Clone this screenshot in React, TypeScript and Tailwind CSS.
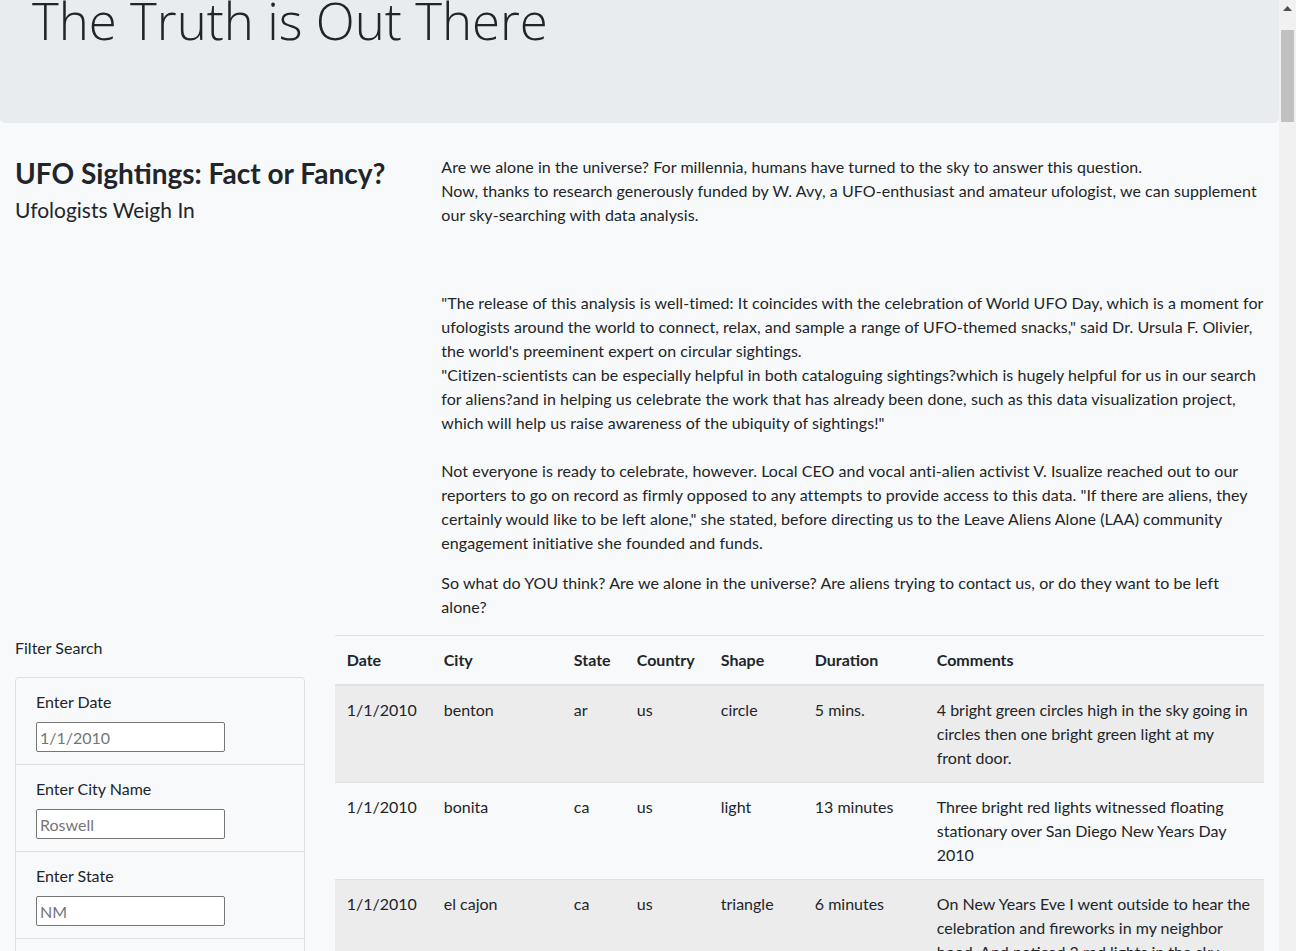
const FONT = "font-['Lato','Liberation_Sans',sans-serif]";

interface Sighting {
  date: string;
  city: string;
  state: string;
  country: string;
  shape: string;
  duration: string;
  comments: string;
}

const SIGHTINGS: Sighting[] = [
  {
    date: "1/1/2010",
    city: "benton",
    state: "ar",
    country: "us",
    shape: "circle",
    duration: "5 mins.",
    comments: "4 bright green circles high in the sky going in circles then one bright green light at my front door.",
  },
  {
    date: "1/1/2010",
    city: "bonita",
    state: "ca",
    country: "us",
    shape: "light",
    duration: "13 minutes",
    comments: "Three bright red lights witnessed floating stationary over San Diego New Years Day 2010",
  },
  {
    date: "1/1/2010",
    city: "el cajon",
    state: "ca",
    country: "us",
    shape: "triangle",
    duration: "6 minutes",
    comments:
      "On New Years Eve I went outside to hear the celebration and fireworks in my neighbor hood. And noticed 3 red lights in the sky.",
  },
];

const COLUMNS = [
  { label: "Date", width: "w-[97px]" },
  { label: "City", width: "w-[130px]" },
  { label: "State", width: "w-[63px]" },
  { label: "Country", width: "w-[84px]" },
  { label: "Shape", width: "w-[94px]" },
  { label: "Duration", width: "w-[122px]" },
  { label: "Comments", width: "" },
];

const FILTERS = [
  { label: "Enter Date", placeholder: "1/1/2010" },
  { label: "Enter City Name", placeholder: "Roswell" },
  { label: "Enter State", placeholder: "NM" },
  { label: "Enter Country", placeholder: "us" },
  { label: "Enter Shape", placeholder: "circle" },
];

function FilterItem({ label, placeholder }: { label: string; placeholder: string }) {
  return (
    <li className="px-5 py-3 border-b border-[#dfe0e1] last:border-b-0">
      <label className="block leading-6 mb-2">{label}</label>
      <input
        type="text"
        placeholder={placeholder}
        className="block w-[189px] h-[30px] px-[3px] border border-[#767676] rounded-[2px] bg-white text-base placeholder:text-[#757575] outline-none"
      />
    </li>
  );
}

function FakeScrollbar() {
  return (
    <div className="w-[17px] shrink-0 bg-[#f1f1f1] flex flex-col items-center">
      <div className="h-[17px] flex items-center justify-center">
        <svg width="9" height="5" viewBox="0 0 9 5">
          <path d="M0 5 L4.5 0 L9 5 Z" fill="#505050" />
        </svg>
      </div>
      <div className="mt-[13px] w-[13px] h-[92px] bg-[#c1c1c1]" />
    </div>
  );
}

export default function App() {
  return (
    <div className={`h-[951px] overflow-hidden flex text-[#212529] ${FONT}`}>
      <main className="flex-1 bg-[#f8f9fa] overflow-hidden">
        {/* Jumbotron, scrolled part way off the top */}
        <header className="h-[123px] overflow-hidden bg-[#e9ecef] rounded-b-[5px] px-8 pb-16 flex flex-col justify-end mb-8">
          <h1 className="font-['Open_Sans','Lato',sans-serif] text-[51px] font-light leading-[1.2] mb-2 whitespace-nowrap">
            The Truth is Out There
          </h1>
        </header>

        {/* Article */}
        <section className="flex">
          <div className="w-1/3 px-[15px]">
            <h3 className="text-[28px] font-bold leading-[1.2] mb-[6px] pt-[2px]">UFO Sightings: Fact or Fancy?</h3>
            <h5 className="text-[21px] leading-[1.2]">Ufologists Weigh In</h5>
          </div>
          <div className="w-2/3 px-[15px] text-base leading-6 tracking-[0.06px]">
            <p className="mb-16">
              Are we alone in the universe? For millennia, humans have turned to the sky to answer this question.
              <br />
              Now, thanks to research generously funded by W. Avy, a UFO-enthusiast and amateur ufologist, we can
              supplement our sky-searching with data analysis.
            </p>
            <p>
              "The release of this analysis is well-timed: It coincides with the celebration of World UFO Day, which is a
              moment for ufologists around the world to connect, relax, and sample a range of UFO-themed snacks," said Dr.
              Ursula F. Olivier, the world's preeminent expert on circular sightings.
              <br />
              "Citizen-scientists can be especially helpful in both cataloguing sightings?which is hugely helpful for us in
              our search for aliens?and in helping us celebrate the work that has already been done, such as this data
              visualization project, which will help us raise awareness of the ubiquity of sightings!"
              <br />
              <br />
              Not everyone is ready to celebrate, however. Local CEO and vocal anti-alien activist V. Isualize reached out
              to our reporters to go on record as firmly opposed to any attempts to provide access to this data. "If there
              are aliens, they certainly would like to be left alone," she stated, before directing us to the Leave Aliens
              Alone (LAA) community engagement initiative she founded and funds.
            </p>
            <p className="mt-4 mb-4">
              So what do YOU think? Are we alone in the universe? Are aliens trying to contact us, or do they want to be
              left alone?
            </p>
          </div>
        </section>

        {/* Filters + table */}
        <section className="flex text-base leading-6">
          <aside className="w-1/4 px-[15px]">
            <p className="leading-6 mb-[17px] mt-px">Filter Search</p>
            <ul className="border border-[#dfe0e1] rounded-[4px]">
              {FILTERS.map((f) => (
                <FilterItem key={f.label} label={f.label} placeholder={f.placeholder} />
              ))}
            </ul>
          </aside>
          <div className="w-3/4 px-[15px]">
            <table className="w-full table-fixed border-collapse">
              <thead>
                <tr>
                  {COLUMNS.map((c) => (
                    <th
                      key={c.label}
                      className={`${c.width} text-left font-bold p-3 border-t border-[#dee2e6] border-b-2 align-bottom`}
                    >
                      {c.label}
                    </th>
                  ))}
                </tr>
              </thead>
              <tbody>
                {SIGHTINGS.map((s, i) => (
                  <tr key={s.city} className={i % 2 === 0 ? "bg-[#ececed]" : ""}>
                    {[s.date, s.city, s.state, s.country, s.shape, s.duration, s.comments].map((v, j) => (
                      <td key={j} className="p-3 border-t border-[#dee2e6] align-top">
                        {v}
                      </td>
                    ))}
                  </tr>
                ))}
              </tbody>
            </table>
          </div>
        </section>
      </main>
      <FakeScrollbar />
    </div>
  );
}
